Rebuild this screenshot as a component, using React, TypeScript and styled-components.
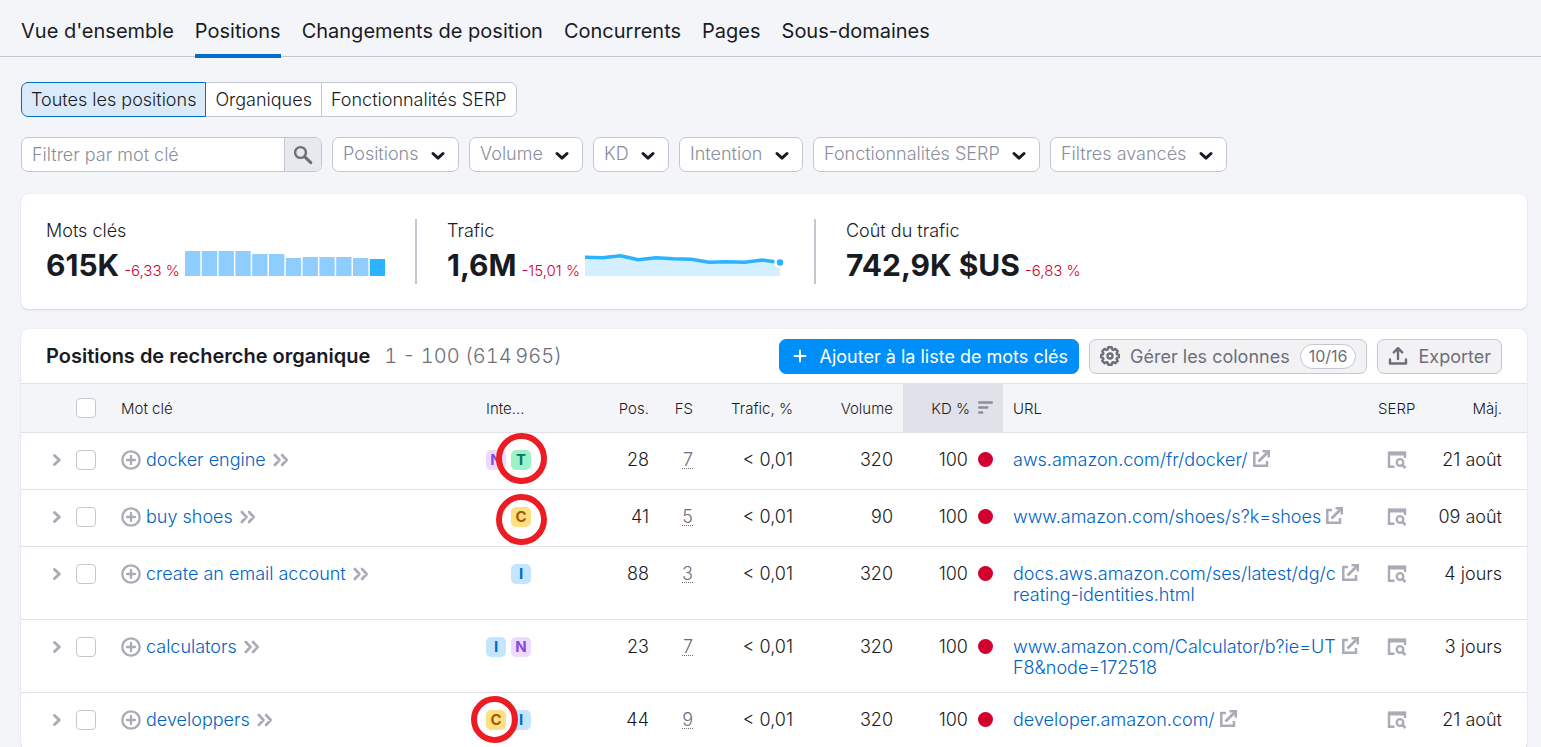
import React from "react";
import styled, { createGlobalStyle, css } from "styled-components";

const color = {
  page: "#f4f5f9",
  text: "#191b23",
  muted: "#8a8e9b",
  secondary: "#6c6e79",
  icon: "#a9abb6",
  border: "#c4c7cf",
  line: "#e0e1e9",
  link: "#0062c4",
  accent: "#006dca",
  danger: "#d1002f",
};

const GlobalStyle = createGlobalStyle`
  *, *::before, *::after { box-sizing: border-box; }
  body {
    margin: 0;
    background: ${color.page};
    color: ${color.text};
    font-family: Inter, "Liberation Sans", sans-serif;
    font-size: 18px;
    font-weight: 300;
    line-height: 21px;
  }
  button, input, select { font: inherit; color: inherit; margin: 0; }
  button { cursor: pointer; }
  svg { display: block; flex: none; }
`;

const Page = styled.div`
  min-height: 100vh;
  max-height: 100vh;
  overflow: hidden;
`;

const Tabs = styled.nav`
  display: flex;
  gap: 21px;
  height: 57px;
  padding: 0 21px;
  border-bottom: 1px solid ${color.border};
`;

const Tab = styled.a<{ $active?: boolean }>`
  height: 58px;
  padding-top: 19px;
  font-size: 20px;
  font-weight: 400;
  line-height: 24px;
  color: inherit;
  text-decoration: none;
  border-bottom: 4px solid ${(p) => (p.$active ? color.accent : "transparent")};
`;

const Content = styled.main`
  display: flex;
  flex-direction: column;
  gap: 20px;
  padding: 25px 14px 0 21px;
`;

const Segments = styled.div`
  display: flex;
`;

const Segment = styled.button<{ $active?: boolean }>`
  position: relative;
  height: 35px;
  padding: 0 9px;
  background: #fff;
  border: 1px solid ${color.border};
  & + & { margin-left: -1px; }
  &:first-child { border-radius: 7px 0 0 7px; }
  &:last-child { border-radius: 0 7px 7px 0; }
  ${(p) =>
    p.$active &&
    css`
      z-index: 1;
      background: #daeaf9;
      border-color: ${color.accent};
    `}
`;

const Filters = styled.form`
  display: flex;
  flex-wrap: wrap;
  gap: 10px;
`;

const Search = styled.div`
  display: flex;
  width: 301px;
  height: 35px;
  background: #fff;
  border: 1px solid ${color.border};
  border-radius: 7px;
  overflow: hidden;
`;

const SearchInput = styled.input`
  flex: 1;
  min-width: 0;
  padding: 0 10px;
  border: 0;
  outline: 0;
  background: none;
  &::placeholder { color: ${color.muted}; opacity: 1; }
`;

const SearchButton = styled.button`
  display: flex;
  align-items: center;
  justify-content: center;
  width: 37px;
  padding: 0;
  border: 0;
  border-left: 1px solid ${color.border};
  background: #e8e9ee;
  color: ${color.secondary};
`;

const SelectWrap = styled.label`
  position: relative;
  display: block;
  svg {
    position: absolute;
    right: 14px;
    top: 14px;
    pointer-events: none;
  }
`;

const Select = styled.select`
  appearance: none;
  display: block;
  height: 35px;
  padding: 0 39px 2px 10px;
  color: ${color.muted};
  background: #fff;
  border: 1px solid ${color.border};
  border-radius: 7px;
`;

const Card = styled.section`
  background: #fff;
  border-radius: 7px;
  box-shadow: 0 0 1px rgba(25, 27, 35, 0.16), 0 1px 2px rgba(25, 27, 35, 0.12);
`;

const Stats = styled(Card)`
  display: flex;
  margin-top: 2px;
  padding: 25px;
`;

const Stat = styled.div`
  width: 399px;
  height: 65px;
  padding-left: 30px;
  border-left: 2px solid ${color.border};
  &:first-child {
    width: 369px;
    padding-left: 0;
    border-left: 0;
  }
`;

const StatLabel = styled.div`
  padding-top: 1px;
`;

const StatRow = styled.div`
  display: flex;
  align-items: baseline;
  gap: 5px;
  margin-top: 9px;
`;

const StatValue = styled.strong`
  font-size: 30px;
  font-weight: 700;
  line-height: 30px;
`;

const Delta = styled.span`
  font-size: 15px;
  line-height: 20px;
  color: ${color.danger};
`;

const ChartBox = styled.div`
  height: 25px;
`;

const TableCard = styled(Card)``;

const Toolbar = styled.div`
  display: flex;
  align-items: center;
  gap: 10px;
  height: 54px;
  padding: 0 25px;
`;

const Title = styled.h2`
  margin: 0;
  font-size: 20px;
  font-weight: 600;
`;

const Range = styled.span`
  flex: 1;
  padding-left: 4px;
  font-size: 20px;
  font-variant-numeric: tabular-nums;
  color: ${color.secondary};
`;

const Button = styled.button<{ $primary?: boolean }>`
  display: flex;
  align-items: center;
  gap: 10px;
  height: 35px;
  padding: 0 10px;
  font-weight: 400;
  white-space: nowrap;
  border-radius: 7px;
  color: ${(p) => (p.$primary ? "#fff" : color.secondary)};
  background: ${(p) => (p.$primary ? "#008ff8" : "#f2f2f5")};
  border: 1px solid ${(p) => (p.$primary ? "#008ff8" : color.border)};
`;

const Counter = styled.span`
  padding: 0 8px;
  font-size: 16px;
  line-height: 23px;
  background: #fff;
  border: 1px solid ${color.border};
  border-radius: 13px;
`;

const Table = styled.table`
  width: 100%;
  table-layout: fixed;
  border-collapse: separate;
  border-spacing: 0;
`;

type Align = "left" | "right" | "center";

const cellEdges = css`
  &:first-child { padding-right: 15px; }
  &:last-child { padding-right: 25px; }
`;

const Th = styled.th<{ $align?: Align; $sorted?: boolean }>`
  height: 50px;
  padding: 0 10px;
  font-size: 15px;
  font-weight: 300;
  text-align: ${(p) => p.$align ?? "left"};
  white-space: nowrap;
  background: ${(p) => (p.$sorted ? color.line : color.page)};
  border-top: 1px solid ${color.line};
  border-bottom: 1px solid ${color.line};
  ${cellEdges}
`;

const Td = styled.td<{ $align?: Align }>`
  height: 57px;
  padding: 16px 10px 14px;
  vertical-align: top;
  text-align: ${(p) => p.$align ?? "left"};
  white-space: nowrap;
  border-bottom: 1px solid ${color.line};
  ${cellEdges}
`;

const UrlTd = styled(Td)`
  padding-right: 8px;
`;

const Line = styled.div<{ $justify?: string; $gap?: number }>`
  display: flex;
  align-items: center;
  justify-content: ${(p) => p.$justify ?? "flex-start"};
  gap: ${(p) => p.$gap ?? 5}px;
  min-height: 21px;
`;

const Checkbox = styled.input`
  appearance: none;
  width: 20px;
  height: 20px;
  background: #fff;
  border: 1px solid ${color.border};
  border-radius: 4px;
`;

const IconButton = styled.button`
  display: flex;
  padding: 0;
  border: 0;
  background: none;
  color: ${color.icon};
`;

const Link = styled.a`
  color: ${color.link};
  text-decoration: none;
`;

const UrlCell = styled.div`
  display: flex;
  gap: 4px;
  a:first-child {
    white-space: normal;
    word-break: break-all;
  }
`;

const IconLink = styled.a`
  flex: none;
  color: ${color.icon};
`;

const Features = styled.span`
  color: ${color.secondary};
  text-decoration: underline dotted 1px;
  text-underline-offset: 2px;
`;

const Dot = styled.span`
  width: 15px;
  height: 15px;
  border-radius: 50%;
  background: ${color.danger};
`;

const badgeColors = {
  N: ["#eddaff", "#8649e1"],
  T: ["#9ef2c9", "#007c65"],
  C: ["#fde081", "#a75800"],
  I: ["#c4e5fe", "#006dca"],
};

type Intent = keyof typeof badgeColors;

const Badge = styled.span<{ $intent: Intent }>`
  position: relative;
  width: 20px;
  height: 20px;
  border-radius: 5px;
  font-size: 15px;
  font-weight: 700;
  line-height: 20px;
  text-align: center;
  background: ${(p) => badgeColors[p.$intent][0]};
  color: ${(p) => badgeColors[p.$intent][1]};
`;

const Ring = styled.span<{ $size: number; $x: number; $y: number }>`
  position: absolute;
  z-index: 2;
  left: ${(p) => p.$x}px;
  top: ${(p) => p.$y}px;
  width: ${(p) => p.$size}px;
  height: ${(p) => p.$size}px;
  border: 6px solid #ec1c24;
  border-radius: 50%;
`;

const ChevronDown = () => (
  <svg width="14" height="10" viewBox="0 0 14 10" fill="none" stroke={color.text} strokeWidth="3" strokeLinecap="round" strokeLinejoin="round">
    <path d="M2 2.5 7 7.2l5-4.7" />
  </svg>
);

const SearchIcon = () => (
  <svg width="20" height="20" viewBox="0 0 20 20" fill="none" stroke="currentColor">
    <circle cx="7.5" cy="7.5" r="5.4" strokeWidth="2.4" />
    <path d="m11.8 11.8 6 5.8" strokeWidth="3" strokeLinecap="round" />
  </svg>
);

const PlusIcon = () => (
  <svg width="20" height="20" viewBox="0 0 20 20" fill="none" stroke="currentColor" strokeWidth="2" strokeLinecap="round">
    <path d="M10 4.5v11M4.5 10h11" />
  </svg>
);

const GearIcon = () => (
  <svg width="20" height="20" viewBox="0 0 20 20" fill="none" stroke="currentColor" strokeWidth="2.4" strokeLinejoin="round">
    <path d="M8.3 1.3h3.4l.6 2.2 1.1.5 2-1.1 2.3 2.4-1.1 2 .4 1 2 .6v2.3l-2 .6-.4 1.1 1.1 2-2.3 2.3-2-1.1-1.1.5-.6 2.1H8.3l-.6-2.1-1.1-.5-2 1.1-2.3-2.3 1.1-2-.4-1.1-2-.6V8.9l2-.6.4-1-1.1-2 2.3-2.4 2 1.1 1.1-.5z" />
    <circle cx="10" cy="10" r="2.5" />
  </svg>
);

const ExportIcon = () => (
  <svg width="20" height="20" viewBox="0 0 20 20" fill="none" stroke="currentColor" strokeWidth="2.4" strokeLinecap="round" strokeLinejoin="round">
    <path d="M2 13.5v4h16v-4M10 13V3M5.8 6.4 10 2.2l4.2 4.2" />
  </svg>
);

const ExpandIcon = () => (
  <svg width="10" height="14" viewBox="0 0 10 14" fill="none" stroke="currentColor" strokeWidth="3" strokeLinecap="round" strokeLinejoin="round">
    <path d="m2.5 2.5 4.8 4.5-4.8 4.5" />
  </svg>
);

const AddIcon = () => (
  <svg width="20" height="20" viewBox="0 0 20 20" fill="none" stroke="currentColor" strokeWidth="2.3" strokeLinecap="round">
    <circle cx="10" cy="10" r="8.7" />
    <path d="M10 6v8M6 10h8" />
  </svg>
);

const DoubleChevron = () => (
  <svg width="18" height="14" viewBox="0 0 18 14" fill="none" stroke="currentColor" strokeWidth="2.6" strokeLinecap="round" strokeLinejoin="round">
    <path d="M3.8 2 8.5 7l-4.7 5M11 2l4.7 5L11 12" />
  </svg>
);

const ExternalIcon = () => (
  <svg width="19" height="19" viewBox="0 0 19 19" fill="none" stroke="currentColor" strokeWidth="2.5">
    <path d="M7 4H2.3v12.7H15V12" />
    <path d="M6.5 12.5 15.5 3.5" strokeWidth="2.8" />
    <path d="M10.5 2.2h6.3v6.3" />
  </svg>
);

const SerpIcon = () => (
  <svg width="20" height="18" viewBox="0 0 20 18" fill="none" stroke="currentColor">
    <path d="M7.5 15.8H2V2h16v5" strokeWidth="2.4" />
    <path d="M1 2.5h18" strokeWidth="4" />
    <circle cx="13" cy="11.5" r="3.3" strokeWidth="2.3" />
    <path d="m15.5 14 3 3" strokeWidth="2.5" />
  </svg>
);

const SortIcon = () => (
  <svg width="15" height="14" viewBox="0 0 15 14" fill="none" stroke={color.muted} strokeWidth="2.4" strokeLinecap="round">
    <path d="M1.2 1.5h12.6M1.2 6.5h8M1.2 11.5h3" />
  </svg>
);

const barHeights = [25, 25, 25, 25, 22, 22, 18, 19, 19, 19, 18, 17];

const BarChart = () => (
  <svg width="200" height="25" viewBox="0 0 200 25">
    {barHeights.map((h, i) => (
      <rect
        key={i}
        x={i * 16.8}
        y={25 - h}
        width="15.3"
        height={h}
        fill={i === barHeights.length - 1 ? "#2bb3ff" : "#8ecdff"}
      />
    ))}
  </svg>
);

const trend = [6.3, 6.7, 4.7, 8.7, 6.7, 7.7, 8.3, 11.3, 10.7, 11.3, 9, 11.5];
const trendLine = trend.map((y, i) => `${(i * 195) / 11},${y}`).join(" ");

const LineChart = () => (
  <svg width="200" height="25" viewBox="0 0 200 25">
    <polygon points={`0,25 ${trendLine} 195,25`} fill="#d4efff" />
    <polyline points={trendLine} fill="none" stroke="#2bb3ff" strokeWidth="3.6" />
    <circle cx="195" cy="11.5" r="4.5" fill="#2bb3ff" stroke="#fff" strokeWidth="2.5" />
  </svg>
);

const filters = ["Positions", "Volume", "KD", "Intention", "Fonctionnalités SERP", "Filtres avancés"];

interface Row {
  keyword: string;
  intents: Intent[];
  ring?: { index: number; size: number; x: number; y: number };
  pos: number;
  features: number;
  volume: number;
  url: string;
  updated: string;
}

const rows: Row[] = [
  { keyword: "docker engine", intents: ["N", "T"], ring: { index: 1, size: 51, x: -15, y: -17 }, pos: 28, features: 7, volume: 320, url: "aws.amazon.com/fr/docker/", updated: "21 août" },
  { keyword: "buy shoes", intents: ["C"], ring: { index: 0, size: 51, x: -15, y: -13 }, pos: 41, features: 5, volume: 90, url: "www.amazon.com/shoes/s?k=shoes", updated: "09 août" },
  { keyword: "create an email account", intents: ["I"], pos: 88, features: 3, volume: 320, url: "docs.aws.amazon.com/ses/latest/dg/creating-identities.html", updated: "4 jours" },
  { keyword: "calculators", intents: ["I", "N"], pos: 23, features: 7, volume: 320, url: "www.amazon.com/Calculator/b?ie=UTF8&node=172518", updated: "3 jours" },
  { keyword: "developpers", intents: ["C", "I"], ring: { index: 0, size: 47, x: -15, y: -14 }, pos: 44, features: 9, volume: 320, url: "developer.amazon.com/", updated: "21 août" },
];

const KeywordRow = ({ row }: { row: Row }) => (
  <tr>
    <Td>
      <Line $justify="flex-end" $gap={14}>
        <IconButton aria-label={`Développer ${row.keyword}`}><ExpandIcon /></IconButton>
        <Checkbox type="checkbox" aria-label={`Sélectionner ${row.keyword}`} />
      </Line>
    </Td>
    <Td>
      <Line>
        <IconButton aria-label={`Ajouter ${row.keyword}`}><AddIcon /></IconButton>
        <Link href="#">{row.keyword}</Link>
        <IconButton aria-label={`Détails de ${row.keyword}`}><DoubleChevron /></IconButton>
      </Line>
    </Td>
    <Td>
      <Line $justify="flex-end">
        {row.intents.map((intent, i) => (
          <Badge key={intent} $intent={intent}>
            {intent}
            {row.ring?.index === i && <Ring $size={row.ring.size} $x={row.ring.x} $y={row.ring.y} />}
          </Badge>
        ))}
      </Line>
    </Td>
    <Td $align="right">{row.pos}</Td>
    <Td $align="right"><Features>{row.features}</Features></Td>
    <Td $align="right">&lt; 0,01</Td>
    <Td $align="right">{row.volume}</Td>
    <Td><Line $justify="flex-end" $gap={10}>100<Dot /></Line></Td>
    <UrlTd>
      <UrlCell>
        <Link href="#">{row.url}</Link>
        <IconLink href="#" aria-label={`Ouvrir ${row.url}`}><ExternalIcon /></IconLink>
      </UrlCell>
    </UrlTd>
    <Td>
      <Line $justify="center">
        <IconButton aria-label={`SERP de ${row.keyword}`}><SerpIcon /></IconButton>
      </Line>
    </Td>
    <Td $align="right">{row.updated}</Td>
  </tr>
);

export default function App() {
  return (
    <Page>
      <GlobalStyle />
      <Tabs>
        <Tab href="#">Vue d'ensemble</Tab>
        <Tab href="#" $active>Positions</Tab>
        <Tab href="#">Changements de position</Tab>
        <Tab href="#">Concurrents</Tab>
        <Tab href="#">Pages</Tab>
        <Tab href="#">Sous-domaines</Tab>
      </Tabs>
      <Content>
        <Segments>
          <Segment $active>Toutes les positions</Segment>
          <Segment>Organiques</Segment>
          <Segment>Fonctionnalités SERP</Segment>
        </Segments>
        <Filters>
          <Search>
            <SearchInput placeholder="Filtrer par mot clé" aria-label="Filtrer par mot clé" />
            <SearchButton type="button" aria-label="Rechercher"><SearchIcon /></SearchButton>
          </Search>
          {filters.map((name) => (
            <SelectWrap key={name}>
              <Select aria-label={name}><option>{name}</option></Select>
              <ChevronDown />
            </SelectWrap>
          ))}
        </Filters>
        <Stats>
          <Stat>
            <StatLabel>Mots clés</StatLabel>
            <StatRow>
              <StatValue>615K</StatValue>
              <Delta>-6,33 %</Delta>
              <ChartBox><BarChart /></ChartBox>
            </StatRow>
          </Stat>
          <Stat>
            <StatLabel>Trafic</StatLabel>
            <StatRow>
              <StatValue>1,6M</StatValue>
              <Delta>-15,01 %</Delta>
              <ChartBox><LineChart /></ChartBox>
            </StatRow>
          </Stat>
          <Stat>
            <StatLabel>Coût du trafic</StatLabel>
            <StatRow>
              <StatValue>742,9K $US</StatValue>
              <Delta>-6,83 %</Delta>
            </StatRow>
          </Stat>
        </Stats>
        <TableCard>
          <Toolbar>
            <Title>Positions de recherche organique</Title>
            <Range>1 - 100 (614&#8239;965)</Range>
            <Button $primary><PlusIcon />Ajouter à la liste de mots clés</Button>
            <Button><GearIcon />Gérer les colonnes<Counter>10/16</Counter></Button>
            <Button><ExportIcon />Exporter</Button>
          </Toolbar>
          <Table>
            <colgroup>
              <col width="90" />
              <col />
              <col width="65" />
              <col width="118" />
              <col width="44" />
              <col width="100" />
              <col width="100" />
              <col width="100" />
              <col />
              <col width="58" />
              <col width="101" />
            </colgroup>
            <thead>
              <tr>
                <Th><Line $justify="flex-end"><Checkbox type="checkbox" aria-label="Tout sélectionner" /></Line></Th>
                <Th>Mot clé</Th>
                <Th>Inte...</Th>
                <Th $align="right">Pos.</Th>
                <Th $align="right">FS</Th>
                <Th $align="right">Trafic, %</Th>
                <Th $align="right">Volume</Th>
                <Th $sorted><Line $justify="flex-end" $gap={8}>KD %<SortIcon /></Line></Th>
                <Th>URL</Th>
                <Th>SERP</Th>
                <Th $align="right">Màj.</Th>
              </tr>
            </thead>
            <tbody>
              {rows.map((row) => <KeywordRow key={row.keyword} row={row} />)}
            </tbody>
          </Table>
        </TableCard>
      </Content>
    </Page>
  );
}
